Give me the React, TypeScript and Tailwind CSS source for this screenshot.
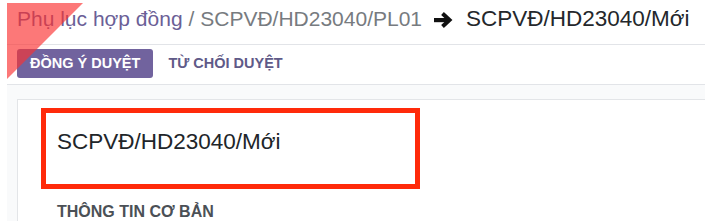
export default function App() {
  const font = { fontFamily: '"Liberation Sans", Arial, sans-serif' };
  return (
    <div className="h-screen bg-white pl-[7px] pt-[3px]" style={font}>
      <div className="relative h-full overflow-hidden bg-[#f9fafb]">
        {/* environment ribbon */}
        <div className="pointer-events-none absolute left-0 top-0 z-10 h-[76px] w-[76px] bg-[rgba(250,50,50,0.66)] [clip-path:polygon(0_0,100%_0,0_100%)]" />

        <div className="bg-white">
          <div className="box-border flex h-[42px] items-start border-b border-[#e2e4e8] pl-[10px] pt-[4px]">
            <div className="flex items-center text-[21px] leading-[24px] whitespace-nowrap">
              <span className="text-[#6b5f97]">Phụ lục hợp đồng</span>
              <span className="ml-[6px] text-[#777b80]">/ SCPVĐ/HD23040/PL01</span>
              <svg
                width="20"
                height="18"
                viewBox="0 0 20 18"
                className="ml-[12px] mr-[12px] mt-[1px] shrink-0"
              >
                <rect x="0" y="7" width="13" height="4.2" fill="#111" />
                <path
                  d="M8.5 2.5 L15.5 9 L8.5 15.5"
                  fill="none"
                  stroke="#111"
                  strokeWidth="4"
                  strokeLinejoin="miter"
                />
              </svg>
              <span className="text-[22.5px] text-[#24272b]">SCPVĐ/HD23040/Mới</span>
            </div>
          </div>

          <div className="box-border flex h-[40px] items-start border-b border-[#e2e4e8] pl-[10px] pt-[4px]">
            <button
              type="button"
              className="h-[29px] rounded-[3px] bg-[#71639e] px-[13px] text-[14.5px] font-bold uppercase text-white"
            >
              Đồng ý duyệt
            </button>
            <button
              type="button"
              className="ml-[15px] h-[29px] text-[14.5px] font-bold uppercase text-[#5f5a88]"
            >
              Từ chối duyệt
            </button>
          </div>
        </div>

        <div className="ml-[10px] mt-[14px] h-full border border-r-0 border-[#e3e5e8] bg-white pl-[23px] pt-[8px]">
          <div className="box-border h-[81px] w-[379px] border-[5px] border-[#ff2a0a] pl-[11px] pt-[16px]">
            <div className="text-[22.5px] leading-[26px] text-[#212529]">SCPVĐ/HD23040/Mới</div>
          </div>
          <div className="ml-[16px] mt-[13px] text-[16px] font-bold leading-[20px] text-[#4b5056]">
            THÔNG TIN CƠ BẢN
          </div>
        </div>
      </div>
    </div>
  );
}
